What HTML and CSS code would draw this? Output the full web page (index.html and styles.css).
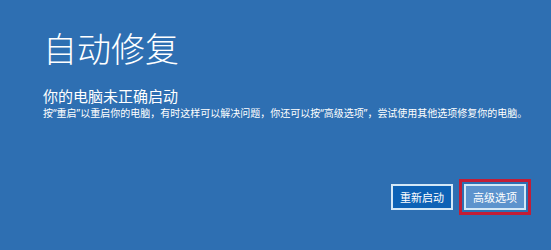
FILE: index.html
```html
<!DOCTYPE html>
<html lang="zh-CN">
<head>
<meta charset="utf-8">
<title>自动修复</title>
<link rel="stylesheet" href="styles.css">
</head>
<body>
<main class="screen">
  <h1 class="title">自动修复</h1>
  <h2 class="subtitle">你的电脑未正确启动</h2>
  <p class="desc">按<span class="q">“</span>重启<span class="q">”</span>以重启你的电脑，有时这样可以解决问题，你还可以按<span class="q">“</span>高级选项<span class="q">”</span>，尝试使用其他选项修复你的电脑。</p>
  <div class="actions">
    <button class="btn btn-primary">重新启动</button>
    <div class="highlight">
      <button class="btn btn-secondary">高级选项</button>
    </div>
  </div>
</main>
</body>
</html>
```

FILE: styles.css
```css
html, body {
  margin: 0;
  padding: 0;
  width: 551px;
  height: 250px;
  overflow: hidden;
  background: #2e6fb2;
}
.screen {
  box-sizing: border-box;
  width: 551px;
  height: 250px;
  padding: 24px 0 0 43px;
  font-family: "Noto Sans CJK SC", "Noto Sans", sans-serif;
  color: #ffffff;
  display: flex;
  flex-direction: column;
}
.title {
  margin: 0;
  font-size: 34px;
  font-weight: 300;
  line-height: 48px;
}
.subtitle {
  margin: 14px 0 0 0;
  font-size: 15px;
  font-weight: 400;
  line-height: 20px;
}
.desc {
  margin: 0;
  font-size: 10px;
  line-height: 14px;
  white-space: nowrap;
}
.q {
  font-family: "Noto Sans", "DejaVu Sans", sans-serif;
}
.actions {
  display: flex;
  justify-content: flex-end;
  align-items: center;
  gap: 6px;
  margin-top: 59px;
  padding-right: 20px;
}
.btn {
  box-sizing: border-box;
  width: 62px;
  height: 26px;
  padding: 0;
  font-family: "Noto Sans CJK SC", sans-serif;
  font-size: 11px;
  color: #ffffff;
  border: 2px solid #d4e8f7;
  cursor: pointer;
}
.btn-primary {
  background: #0d62b6;
}
.btn-secondary {
  background: #5c93cd;
}
.highlight {
  border: 3px solid #c21d37;
  padding: 2px;
  display: flex;
}
```
